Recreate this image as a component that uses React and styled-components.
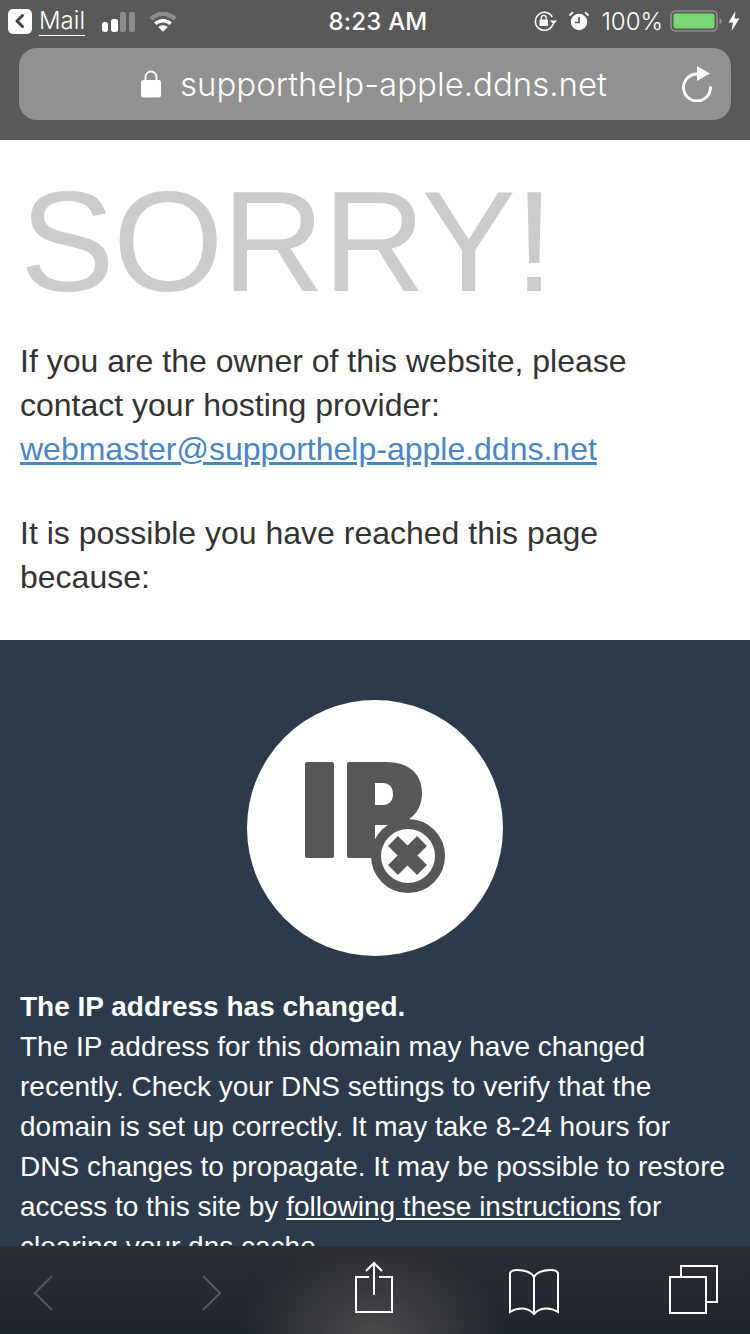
import React from 'react';
import styled, { createGlobalStyle } from 'styled-components';

const GlobalStyle = createGlobalStyle`
  html, body {
    margin: 0;
    padding: 0;
    background: #fff;
  }
`;

const Screen = styled.div`
  position: relative;
  width: 750px;
  height: 1334px;
  overflow: hidden;
  font-family: "Liberation Sans", Arial, sans-serif;
`;

const Chrome = styled.header`
  height: 140px;
  box-sizing: border-box;
  background: #595959;
  color: #fff;
  font-family: Inter, "Liberation Sans", sans-serif;
`;

const StatusBar = styled.div`
  display: grid;
  grid-template-columns: 1fr auto 1fr;
  align-items: center;
  height: 48px;
  padding: 0 10px 6px 8px;
  box-sizing: border-box;
`;

const StatusLeft = styled.div`
  display: flex;
  align-items: center;
`;

const StatusRight = styled.div`
  display: flex;
  align-items: center;
  justify-content: flex-end;
`;

const BackBadge = styled.div`
  width: 24px;
  height: 25px;
  border-radius: 5px;
  background: #fff;
  display: flex;
  align-items: center;
  justify-content: center;
`;

const BackApp = styled.span`
  margin-left: 7px;
  font-size: 24px;
  font-weight: 300;
  line-height: 28px;
  border-bottom: 1px solid #fff;
`;

const Clock = styled.div`
  padding-left: 8px;
  font-size: 24px;
  font-weight: 500;
  letter-spacing: 0.2px;
`;

const Battery = styled.span`
  font-size: 24px;
  font-weight: 300;
  margin: 0 7px 0 12px;
`;

const AddressBar = styled.div`
  position: relative;
  margin: 0 19px;
  height: 72px;
  border-radius: 18px;
  background: #919191;
  display: flex;
  align-items: center;
  justify-content: center;
  padding-right: 2px;
`;

const Url = styled.span`
  margin-left: 19px;
  font-size: 33px;
  font-weight: 300;
`;

const ReloadSlot = styled.div`
  position: absolute;
  right: 17px;
  top: 18px;
  line-height: 0;
`;

const Intro = styled.section`
  height: 500px;
  box-sizing: border-box;
  padding: 0 20px;
  background: #fff;
  color: #333;
`;

const Sorry = styled.h1`
  margin: 0;
  padding-top: 27px;
  height: 199px;
  box-sizing: border-box;
  font-size: 142px;
  line-height: 150px;
  font-weight: 400;
  letter-spacing: -1.6px;
  color: #ccc;
`;

const Paragraph = styled.p`
  margin: 0 0 40px;
  font-size: 32px;
  line-height: 44px;
`;

const MailLink = styled.a`
  color: #4a86c5;
  text-decoration: underline;
`;

const Reason = styled.section`
  background: #2c3a4b;
  color: #fff;
  padding: 60px 20px 0;
  height: 700px;
  box-sizing: border-box;
`;

const Badge = styled.div`
  width: 256px;
  height: 256px;
  margin: 0 auto 31px;
  border-radius: 50%;
  background: #fff;
  line-height: 0;
`;

const ReasonText = styled.p`
  margin: 0;
  font-size: 28px;
  line-height: 40px;
`;

const ReasonTitle = styled.strong`
  display: block;
`;

const InlineLink = styled.a`
  color: #fff;
  text-decoration: underline;
`;

const Toolbar = styled.nav`
  position: absolute;
  left: 0;
  right: 0;
  bottom: 0;
  height: 88px;
  box-sizing: border-box;
  padding-left: 33px;
  display: flex;
  align-items: flex-start;
  background:
    radial-gradient(ellipse 135px 90px at 375px 88px, #4a4a4b 0%, rgba(74, 74, 75, 0) 100%),
    linear-gradient(#2b2e33, #1f252c);
`;

const ToolIcon = styled.svg`
  display: block;
  flex: none;
  margin-left: ${p => p.$gap || 0}px;
  margin-top: ${p => p.$top}px;
  fill: none;
  stroke: ${p => (p.$off ? '#54575c' : '#fff')};
  stroke-width: 2;
`;

function BackIcon() {
  return (
    <svg width="14" height="16" viewBox="0 0 14 16">
      <path d="M9.5 2.5 L4 8 L9.5 13.5" fill="none" stroke="#444" strokeWidth="3" strokeLinecap="round" strokeLinejoin="round" />
    </svg>
  );
}

function SignalIcon() {
  return (
    <svg width="34" height="21" viewBox="0 0 34 21" style={{ marginLeft: 17 }}>
      <rect x="0" y="11" width="6" height="10" rx="2.5" fill="#fff" />
      <rect x="9" y="8" width="7" height="13" rx="2.5" fill="#fff" />
      <rect x="18" y="1" width="6" height="20" rx="2" fill="#8d8d8d" />
      <rect x="27" y="1" width="6" height="20" rx="2" fill="#8d8d8d" />
    </svg>
  );
}

function WifiIcon() {
  return (
    <svg width="28" height="21" viewBox="0 0 30 22" style={{ marginLeft: 13 }}>
      <path d="M0.5 6.5 C8.5 -1.5 21.5 -1.5 29.5 6.5 L26.5 10 C20 3.5 10 3.5 3.5 10 Z" fill="#8d8d8d" />
      <path d="M5.5 12 C10.5 7 19.5 7 24.5 12 L22 14.8 C18 11 12 11 8 14.8 Z" fill="#fff" />
      <path d="M10 17 C12.8 14.4 17.2 14.4 20 17 L15 22 Z" fill="#fff" />
    </svg>
  );
}

function RotationLockIcon() {
  return (
    <svg width="24" height="20" viewBox="0 0 24 20">
      <path d="M20 13 A9 9 0 1 1 19.3 6" fill="none" stroke="#fff" strokeWidth="1.6" />
      <path d="M17 9.5 H24 L20.5 13.5 Z" fill="#fff" />
      <rect x="6.5" y="8.5" width="8.5" height="6.5" rx="1" fill="#fff" />
      <path d="M8.3 8.5 V6.8 A2.4 2.4 0 0 1 13.2 6.8 V8.5" fill="none" stroke="#fff" strokeWidth="1.4" />
    </svg>
  );
}

function AlarmIcon() {
  return (
    <svg width="20" height="20" viewBox="0 0 20 20" style={{ marginLeft: 12 }}>
      <circle cx="10" cy="11" r="8.2" fill="#fff" />
      <path d="M10 6 V11.5 H5.8" fill="none" stroke="#595959" strokeWidth="1.7" />
      <path d="M0.5 4.5 L4 1.2 M19.5 4.5 L16 1.2" stroke="#fff" strokeWidth="1.8" />
    </svg>
  );
}

function BatteryIcon() {
  return (
    <svg width="53" height="22" viewBox="0 0 53 22">
      <rect x="1" y="1" width="46" height="20" rx="4.5" fill="none" stroke="#8d8d8d" strokeWidth="1.6" />
      <rect x="3.5" y="3.5" width="41" height="15" rx="2.5" fill="#78d873" />
      <path d="M49.5 8 C51 8.5 52 9.5 52 11 C52 12.5 51 13.5 49.5 14 Z" fill="#8d8d8d" />
    </svg>
  );
}

function BoltIcon() {
  return (
    <svg width="12" height="20" viewBox="0 0 12 20" style={{ marginLeft: 5 }}>
      <path d="M7.5 0 L0.5 11.5 H5 L3.5 20 L11.5 7.5 H6.5 Z" fill="#fff" />
    </svg>
  );
}

function LockIcon() {
  return (
    <svg width="20" height="28" viewBox="0 0 20 28">
      <path d="M4.5 11 V7 A5.5 5.5 0 0 1 15.5 7 V11" fill="none" stroke="#fff" strokeWidth="1.8" />
      <rect x="0" y="10" width="20" height="17.5" rx="2.2" fill="#fff" />
    </svg>
  );
}

function ReloadIcon() {
  return (
    <svg width="32" height="36" viewBox="0 0 32 36">
      <path d="M15 8 A13.5 13.5 0 1 0 28.5 21.5" fill="none" stroke="#fff" strokeWidth="3" strokeLinecap="round" />
      <path d="M15 0 L28 7.5 L15 15 Z" fill="#fff" />
    </svg>
  );
}

function IpBadgeArt() {
  return (
    <svg width="256" height="256" viewBox="0 0 256 256">
      <rect x="58" y="62" width="29" height="96" rx="2" fill="#575757" />
      <path
        fillRule="evenodd"
        d="M100 64 Q100 62 102 62 H139 C161 62 175 73 175 93 C175 113 161 125 140 125 H128 V158 H102 Q100 158 100 156 Z M128 83 V105 H136 C142 105 146 101 146 94 C146 87 142 83 136 83 Z"
        fill="#575757"
      />
      <circle cx="161" cy="156" r="32" fill="#fff" stroke="#575757" strokeWidth="10" />
      <path d="M146 141 L175 170 M175 141 L146 170" stroke="#575757" strokeWidth="14" />
    </svg>
  );
}

function App() {
  return (
    <Screen>
      <GlobalStyle />
      <Chrome>
        <StatusBar>
          <StatusLeft>
            <BackBadge><BackIcon /></BackBadge>
            <BackApp>Mail</BackApp>
            <SignalIcon />
            <WifiIcon />
          </StatusLeft>
          <Clock>8:23 AM</Clock>
          <StatusRight>
            <RotationLockIcon />
            <AlarmIcon />
            <Battery>100%</Battery>
            <BatteryIcon />
            <BoltIcon />
          </StatusRight>
        </StatusBar>
        <AddressBar>
          <LockIcon />
          <Url>supporthelp-apple.ddns.net</Url>
          <ReloadSlot><ReloadIcon /></ReloadSlot>
        </AddressBar>
      </Chrome>

      <Intro>
        <Sorry>SORRY!</Sorry>
        <Paragraph>
          If you are the owner of this website, please contact your hosting provider:{' '}
          <MailLink href="#">webmaster@supporthelp-apple.ddns.net</MailLink>
        </Paragraph>
        <Paragraph>It is possible you have reached this page because:</Paragraph>
      </Intro>

      <Reason>
        <Badge><IpBadgeArt /></Badge>
        <ReasonText>
          <ReasonTitle>The IP address has changed.</ReasonTitle>
          The IP address for this domain may have changed recently. Check your DNS settings to
          verify that the domain is set up correctly. It may take 8-24 hours for DNS changes to
          propagate. It may be possible to restore access to this site by{' '}
          <InlineLink href="#">following these instructions</InlineLink> for clearing your dns cache.
        </ReasonText>
      </Reason>

      <Toolbar>
        <ToolIcon $off $top={29} width="20" height="36" viewBox="0 0 20 36">
          <path d="M19 1 L2 18 L19 35" />
        </ToolIcon>
        <ToolIcon $off $top={29} $gap={149} width="20" height="36" viewBox="0 0 20 36">
          <path d="M1 1 L18 18 L1 35" />
        </ToolIcon>
        <ToolIcon $top={15} $gap={133} width="38" height="53" viewBox="0 0 38 53">
          <path d="M14 16 H1 V51 H37 V16 H24" />
          <path d="M19 34 V2 M11 10 L19 2 L27 10" />
        </ToolIcon>
        <ToolIcon $top={22} $gap={116} width="50" height="48" viewBox="0 0 50 48">
          <path d="M25 9 C22 4 15 2 8 2 C5 2 2 3 1 5 V44 C9 39 19 39 25 46 C31 39 41 39 49 44 V5 C48 3 45 2 42 2 C35 2 28 4 25 9 Z M25 9 V46" />
        </ToolIcon>
        <ToolIcon $top={19} $gap={110} width="49" height="49" viewBox="0 0 49 49">
          <path d="M12 11 V1 H48 V37 H38" />
          <rect x="1" y="12" width="36" height="36" />
        </ToolIcon>
      </Toolbar>
    </Screen>
  );
}

export default App;
